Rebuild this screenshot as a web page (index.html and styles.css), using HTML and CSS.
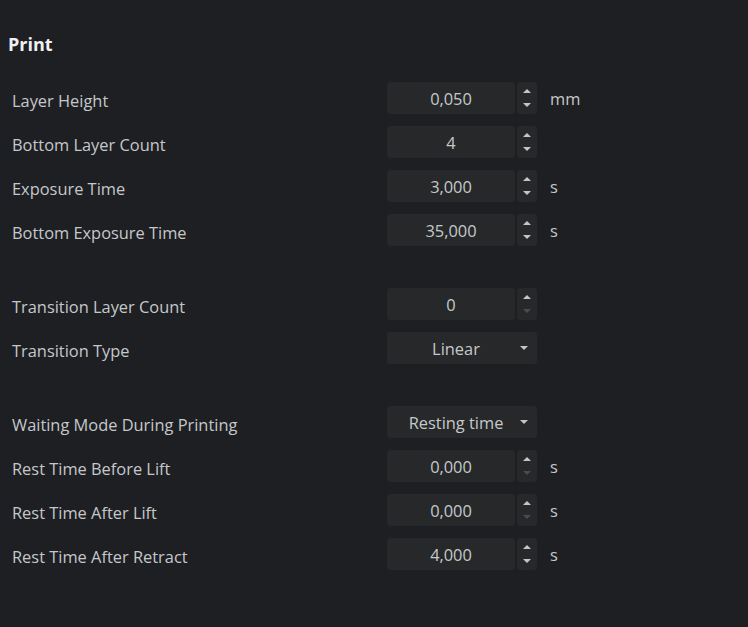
FILE: index.html
```html
<!DOCTYPE html>
<html>
<head>
<meta charset="utf-8">
<link rel="stylesheet" href="styles.css">
</head>
<body>
<div class="panel">
  <h1 class="title">Print</h1>

  <div class="group">
    <div class="row">
      <div class="label">Layer Height</div>
      <div class="control">
        <div class="spin"><div class="field">0,050</div><div class="arrows"><span class="up"></span><span class="down"></span></div></div>
        <span class="unit">mm</span>
      </div>
    </div>
    <div class="row">
      <div class="label">Bottom Layer Count</div>
      <div class="control">
        <div class="spin"><div class="field">4</div><div class="arrows"><span class="up"></span><span class="down"></span></div></div>
      </div>
    </div>
    <div class="row">
      <div class="label">Exposure Time</div>
      <div class="control">
        <div class="spin"><div class="field">3,000</div><div class="arrows"><span class="up"></span><span class="down"></span></div></div>
        <span class="unit">s</span>
      </div>
    </div>
    <div class="row">
      <div class="label">Bottom Exposure Time</div>
      <div class="control">
        <div class="spin"><div class="field">35,000</div><div class="arrows"><span class="up"></span><span class="down"></span></div></div>
        <span class="unit">s</span>
      </div>
    </div>
  </div>

  <div class="group">
    <div class="row">
      <div class="label">Transition Layer Count</div>
      <div class="control">
        <div class="spin"><div class="field">0</div><div class="arrows"><span class="up"></span><span class="down disabled"></span></div></div>
      </div>
    </div>
    <div class="row">
      <div class="label">Transition Type</div>
      <div class="control">
        <div class="combo"><span class="combo-text">Linear</span><span class="caret"></span></div>
      </div>
    </div>
  </div>

  <div class="group">
    <div class="row">
      <div class="label">Waiting Mode During Printing</div>
      <div class="control">
        <div class="combo"><span class="combo-text">Resting time</span><span class="caret"></span></div>
      </div>
    </div>
    <div class="row">
      <div class="label">Rest Time Before Lift</div>
      <div class="control">
        <div class="spin"><div class="field">0,000</div><div class="arrows"><span class="up"></span><span class="down disabled"></span></div></div>
        <span class="unit">s</span>
      </div>
    </div>
    <div class="row">
      <div class="label">Rest Time After Lift</div>
      <div class="control">
        <div class="spin"><div class="field">0,000</div><div class="arrows"><span class="up"></span><span class="down disabled"></span></div></div>
        <span class="unit">s</span>
      </div>
    </div>
    <div class="row">
      <div class="label">Rest Time After Retract</div>
      <div class="control">
        <div class="spin"><div class="field">4,000</div><div class="arrows"><span class="up"></span><span class="down"></span></div></div>
        <span class="unit">s</span>
      </div>
    </div>
  </div>
</div>
</body>
</html>
```

FILE: styles.css
```css
html, body {
  margin: 0;
  padding: 0;
  background: #1e1f22;
  height: 100%;
}
body {
  font-family: "Open Sans", "Noto Sans", sans-serif;
  color: #c5c8cb;
}
.panel {
  padding: 31px 0 0 8px;
}
.title {
  margin: 0 0 25px 0;
  font-size: 18px;
  font-weight: 700;
  line-height: 26px;
  color: #eef0f2;
}
.group {
  display: flex;
  flex-direction: column;
  gap: 12px;
  margin-bottom: 42px;
}
.group + .group + .group {
  margin-top: 1px;
}
.row {
  display: grid;
  grid-template-columns: 379px auto;
  height: 32px;
}
.label {
  padding-left: 4px;
  padding-top: 8px;
  font-size: 16.4px;
  line-height: 22px;
  white-space: nowrap;
}
.control {
  display: flex;
  align-items: center;
}
.spin {
  display: flex;
  gap: 2px;
  height: 32px;
}
.field {
  width: 128px;
  height: 32px;
  background: #27282a;
  border-radius: 3px;
  display: flex;
  align-items: center;
  justify-content: center;
  font-size: 16.4px;
  color: #c5c8cb;
}
.arrows {
  width: 20px;
  height: 32px;
  background: #27282a;
  border-radius: 3px;
  display: flex;
  flex-direction: column;
  align-items: center;
  justify-content: center;
  gap: 10px;
}
.up, .down {
  width: 0;
  height: 0;
  border-left: 4px solid transparent;
  border-right: 4px solid transparent;
}
.up {
  border-bottom: 4px solid #c4c5c7;
}
.down {
  border-top: 4px solid #c4c5c7;
}
.down.disabled {
  border-top-color: #4a4b4e;
}
.unit {
  margin-left: 13px;
  font-size: 16.4px;
  color: #c5c8cb;
}
.combo {
  width: 150px;
  height: 32px;
  background: #27282a;
  border-radius: 3px;
  display: flex;
  align-items: center;
  font-size: 16.4px;
}
.combo-text {
  flex: 1;
  text-align: center;
  padding-left: 5px;
}
.caret {
  width: 0;
  height: 0;
  border-left: 4px solid transparent;
  border-right: 4px solid transparent;
  border-top: 4px solid #c4c5c7;
  margin-right: 9px;
}
```
